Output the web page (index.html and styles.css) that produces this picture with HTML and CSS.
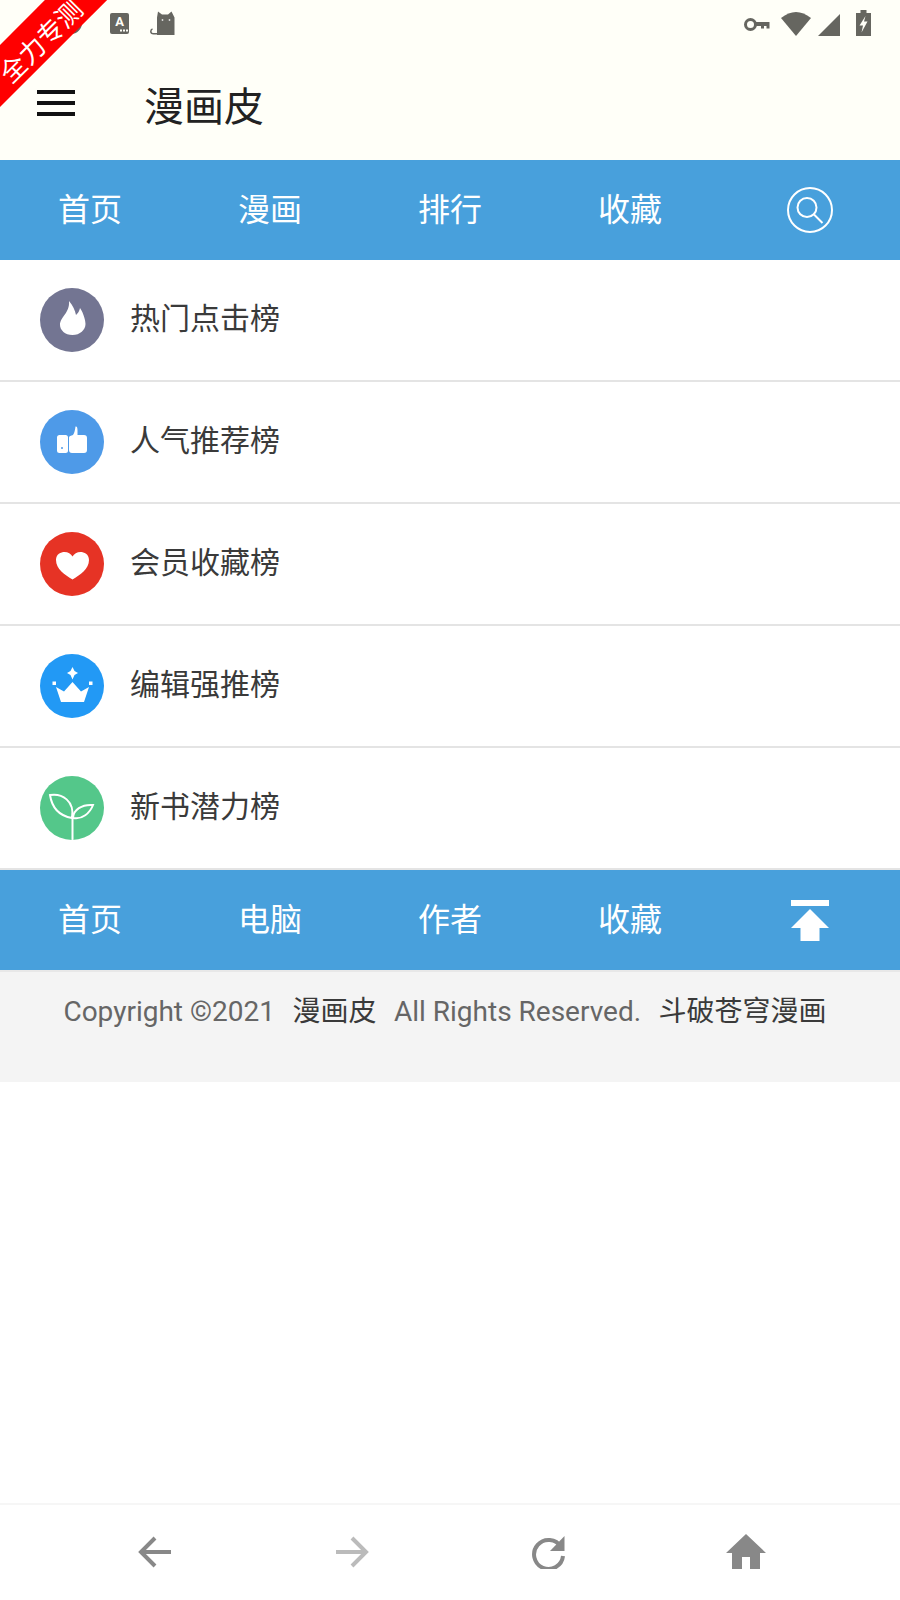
FILE: index.html
```html
<!DOCTYPE html>
<html lang="zh-CN">
<head>
<meta charset="utf-8">
<title>漫画皮</title>
<link rel="stylesheet" href="styles.css">
</head>
<body>
<div class="ribbon">全力专测</div>
<header class="top">
  <div class="status">
    <div class="status-left">
      <svg class="st-dot" viewBox="0 0 22 22" width="22" height="22"><circle cx="11" cy="11" r="9.500" fill="none" stroke="#666660" stroke-width="3"/></svg>
      <svg class="st-a" viewBox="0 0 19 21" width="19" height="21"><rect width="19" height="21" rx="2" fill="#666660"/><text class="st-a-text" x="9.500" y="13" text-anchor="middle">A</text><rect x="10" y="16.500" width="2" height="2" fill="#fffff8"/><rect x="13" y="16.500" width="2" height="2" fill="#fffff8"/><rect x="16" y="16.500" width="2" height="2" fill="#fffff8"/></svg>
      <svg class="st-cat" viewBox="0 0 25 24" width="25" height="24"><path d="M7 24V6.500L8 0.500L12 3.500H18L21.500 0.500L24.500 6.500V24Z" fill="#666660"/><path d="M7 22.800H3.500Q.8 22.800 .8 20.500Q.8 18.500 2.500 18" fill="none" stroke="#666660" stroke-width="1.500"/><circle cx="12.500" cy="9" r=".9" fill="#ddd"/><circle cx="19.500" cy="9" r=".9" fill="#ddd"/></svg>
    </div>
    <div class="status-right">
      <svg class="st-key" viewBox="0 0 26 13" width="26" height="13"><circle cx="6.500" cy="6.500" r="5" fill="none" stroke="#666660" stroke-width="3"/><path d="M11 4H25.500V10.500H22.500V8H20V10.500H17V8H11Z" fill="#666660"/></svg>
      <svg class="st-wifi" viewBox="0 0 32 26" width="32" height="26"><path d="M1 8Q16 -4 31 8L16 26Z" fill="#666660"/></svg>
      <svg class="st-signal" viewBox="0 0 22 22" width="22" height="22"><path d="M0 22L22 0V22Z" fill="#666660"/></svg>
      <svg class="st-batt" viewBox="0 0 15 26" width="15" height="26"><path d="M4.500 0H10.500V3H15V26H0V3H4.500Z" fill="#666660"/><path d="M9.500 6L3.500 15.500H7L5.500 22.500L11.500 11.500H8Z" fill="#fffff8"/></svg>
    </div>
  </div>
  <div class="titlebar">
    <div class="burger"><span></span><span></span><span></span></div>
    <h1 class="title">漫画皮</h1>
  </div>
</header>

<nav class="nav">
  <a class="nav-item nav-text">首页</a>
  <a class="nav-item nav-text">漫画</a>
  <a class="nav-item nav-text">排行</a>
  <a class="nav-item nav-text">收藏</a>
  <a class="nav-item">
    <svg viewBox="0 0 46 46" width="46" height="46"><circle cx="23" cy="23" r="22" fill="none" stroke="#fff" stroke-width="2"/><circle cx="20" cy="20.500" r="9.500" fill="none" stroke="#fff" stroke-width="2"/><path d="M27 27.500L35.500 36" stroke="#fff" stroke-width="2"/></svg>
  </a>
</nav>

<ul class="rank">
  <li class="rank-row">
    <span class="badge badge-fire"><svg viewBox="0 0 64 64" width="64" height="64"><path d="M29 13C33 18 35 22 36 27C38 25 39.500 23 40 20C44 26 45.500 33 45.500 36C45.500 42 40 47 32.500 47C25 47 20 42 20 37C20 29 30 25 29 13Z" fill="#fff"/></svg></span>
    <span class="rank-name">热门点击榜</span>
  </li>
  <li class="rank-row">
    <span class="badge badge-like"><svg viewBox="0 0 64 64" width="64" height="64"><rect x="17" y="25" width="11" height="18" rx="2.500" fill="#fff"/><circle cx="22" cy="38" r="1" fill="#4e9ae8"/><path d="M29 27.500C29 26 31 25.500 33 25C34.500 23 35 20 35.500 16.500C37 16 37.500 18 37.500 20V25H44Q47 25 47 28V40Q47 43 44 43H32Q29 43 29 40Z" fill="#fff"/></svg></span>
    <span class="rank-name">人气推荐榜</span>
  </li>
  <li class="rank-row">
    <span class="badge badge-heart"><svg viewBox="0 0 64 64" width="64" height="64"><path d="M32.500 47.500C25 43 16 37 16 28C16 22 21 20 24.500 20C28 20 31 22 32.500 24.500C34 22 37 20 40.500 20C44 20 49 22 49 28C49 37 40 43 32.500 47.500Z" fill="#fff"/></svg></span>
    <span class="rank-name">会员收藏榜</span>
  </li>
  <li class="rank-row">
    <span class="badge badge-crown"><svg viewBox="0 0 64 64" width="64" height="64"><path d="M32.500 13L34.500 17L38 19L34.500 21L32.500 25.500L30.500 21L27 19L30.500 17Z" fill="#fff"/><rect x="12.500" y="27.500" width="3.500" height="3.500" fill="#fff"/><rect x="49" y="27.500" width="3.500" height="3.500" fill="#fff"/><path d="M16 33L24 37.500L32.500 28L41 37.500L49 33L44 48H21Z" fill="#fff"/></svg></span>
    <span class="rank-name">编辑强推榜</span>
  </li>
  <li class="rank-row">
    <span class="badge badge-leaf"><svg viewBox="0 0 64 64" width="64" height="64"><path d="M32.500 64V41" stroke="#fff" stroke-width="2" fill="none"/><path d="M32 42C20 40 12 32 10 19C22 17 35 25 32 42Z" fill="none" stroke="#fff" stroke-width="2"/><path d="M33 42C33 34 42 28 53 29C50 37 42 44 33 42Z" fill="none" stroke="#fff" stroke-width="2"/></svg></span>
    <span class="rank-name">新书潜力榜</span>
  </li>
</ul>

<nav class="nav nav-bottom">
  <a class="nav-item nav-text">首页</a>
  <a class="nav-item nav-text">电脑</a>
  <a class="nav-item nav-text">作者</a>
  <a class="nav-item nav-text">收藏</a>
  <a class="nav-item">
    <svg viewBox="0 0 38 41" width="38" height="41"><rect width="38" height="6" fill="#fff"/><path d="M19 9L38 28H28.500V41H9.500V28H0Z" fill="#fff"/></svg>
  </a>
</nav>

<footer class="copy">
  <p class="copy-line">Copyright ©2021<a class="copy-link">漫画皮</a>All Rights Reserved.<a class="copy-link">斗破苍穹漫画</a></p>
</footer>

<div class="spacer"></div>

<div class="browser-bar">
  <svg viewBox="0 0 34 34" width="34" height="34"><path d="M33 17H3M17 3L3 17L17 31" fill="none" stroke="#888" stroke-width="4"/></svg>
  <svg viewBox="0 0 34 34" width="34" height="34"><path d="M1 17H31M17 3L31 17L17 31" fill="none" stroke="#bbb" stroke-width="4"/></svg>
  <svg viewBox="0 0 34 34" width="34" height="34"><path d="M29 12A14.500 14.500 0 1 0 31 21" fill="none" stroke="#888" stroke-width="4"/><path d="M32.500 1V16H18Z" fill="#888"/></svg>
  <svg viewBox="0 0 40 36" width="40" height="36"><path d="M20 0L40 19H34V35H24V23H16V35H6V19H0Z" fill="#888"/></svg>
</div>
</body>
</html>
```

FILE: styles.css
```css
* { box-sizing: border-box; }
html, body { margin: 0; padding: 0; }
body {
  width: 900px;
  height: 1600px;
  display: flex;
  flex-direction: column;
  position: relative;
  overflow: hidden;
  background: #fff;
  font-family: Roboto, "Noto Sans CJK SC", sans-serif;
  color: #333;
}
.ribbon {
  position: absolute;
  left: -52px;
  top: 16px;
  width: 180px;
  height: 44px;
  line-height: 54px;
  background: #f00;
  color: #fff;
  font-size: 26px;
  text-align: center;
  transform: rotate(-45deg);
  z-index: 5;
}
.top { height: 160px; background: #fffff8; display: flex; flex-direction: column; }
.status {
  height: 46px;
  display: flex;
  justify-content: space-between;
  align-items: flex-end;
  padding: 0 29px 10px 60px;
  flex: none;
}
.status-left { display: flex; align-items: flex-end; }
.status-right { display: flex; align-items: flex-end; }
.status svg { display: block; }
.st-dot { margin-bottom: 2px; }
.st-a { margin-left: 28px; margin-bottom: 2px; }
.st-cat { margin-left: 21px; margin-bottom: 1px; }
.st-key { margin-bottom: 5px; }
.st-wifi { margin-left: 10px; }
.st-signal { margin-left: 6px; }
.st-batt { margin-left: 16px; }
.st-a-text { font: 700 13px Roboto, sans-serif; fill: #fffff8; }
.titlebar { flex: 1; display: flex; align-items: center; padding-left: 37px; }
.burger { width: 38px; display: flex; flex-direction: column; gap: 7px; }
.burger span { display: block; height: 4px; background: #111; }
.title { margin: 10px 0 0 69px; font-size: 40px; font-weight: 400; color: #222; line-height: 56px; }
.nav { height: 100px; background: #48a0dc; display: flex; flex: none; }
.nav-item {
  width: 180px;
  display: flex;
  align-items: center;
  justify-content: center;
  color: #fff;
  font-size: 32px;
}
.nav-text { padding-bottom: 7px; }
.rank { list-style: none; margin: 0; padding: 0; }
.rank-row {
  height: 122px;
  border-bottom: 2px solid #e4e4e4;
  display: flex;
  align-items: center;
  padding-left: 40px;
  gap: 26px;
}
.badge { width: 64px; height: 64px; border-radius: 50%; flex: none; display: block; overflow: hidden; }
.badge svg { display: block; }
.badge-fire { background: #737592; }
.badge-like { background: #4e9ae8; }
.badge-heart { background: #e63325; }
.badge-crown { background: #2299f5; }
.badge-leaf { background: #54c78a; }
.rank-name { font-size: 30px; color: #3a3a3a; padding-bottom: 8px; }
.copy {
  height: 112px;
  background: #f4f4f4;
  border-top: 2px solid #e8e8e8;
  flex: none;
  padding-top: 20px;
}
.copy-line { margin: 0; text-align: center; font-size: 28px; line-height: 40px; color: #666; }
.copy-link { color: #3a3a3a; margin: 0 17.5px; }
.copy-link:last-child { margin-right: 10px; }
.spacer { flex: 1; }
.browser-bar {
  height: 97px;
  flex: none;
  border-top: 2px solid #f6f6f6;
  padding-bottom: 2px;
  display: grid;
  grid-template-columns: repeat(4, 197px);
  justify-content: center;
  justify-items: center;
  align-items: center;
  background: #fff;
}
.browser-bar svg { display: block; }
```
